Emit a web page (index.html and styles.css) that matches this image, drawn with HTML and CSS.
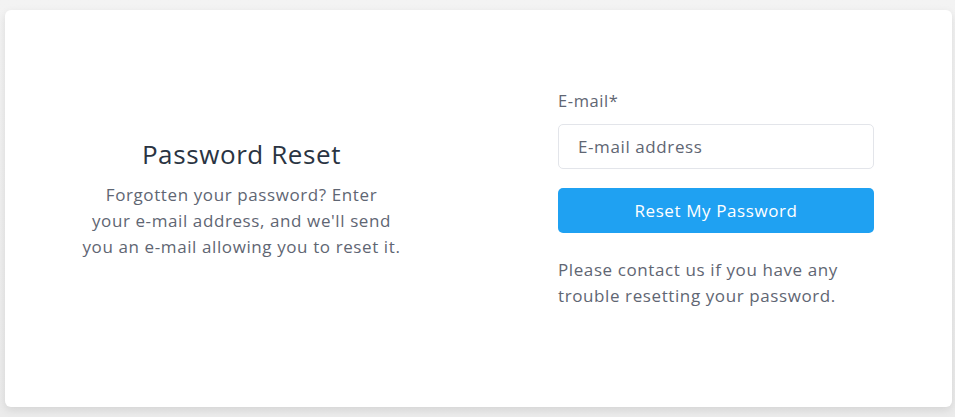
FILE: index.html
```html
<!DOCTYPE html>
<html lang="en">
<head>
<meta charset="utf-8">
<title>Password Reset</title>
<link rel="stylesheet" href="styles.css">
</head>
<body>
<main class="page">
  <section class="card">
    <div class="intro">
      <h1 class="title">Password Reset</h1>
      <p class="lead">Forgotten your password? Enter<br>your e-mail address, and we'll send<br>you an e-mail allowing you to reset it.</p>
    </div>
    <div class="form-col">
      <form class="form">
        <label class="label" for="email">E-mail*</label>
        <input class="input" id="email" type="email" placeholder="E-mail address">
        <button class="btn" type="button">Reset My Password</button>
      </form>
      <p class="note">Please contact us if you have any trouble resetting your password.</p>
    </div>
  </section>
</main>
</body>
</html>
```

FILE: styles.css
```css
* { box-sizing: border-box; }
html, body { margin: 0; padding: 0; }
body {
  width: 955px;
  height: 417px;
  overflow: hidden;
  background: linear-gradient(#f3f3f3, #ebebeb);
  font-family: "Open Sans", "Noto Sans", sans-serif;
  color: #5f6673;
  letter-spacing: 0.6px;
}
.page {
  padding: 10px 3px 10px 5px;
}
.card {
  height: 397px;
  background: #fff;
  border-radius: 6px;
  box-shadow: 0 3px 8px rgba(0,0,0,0.10);
  display: grid;
  grid-template-columns: 473px 1fr;
  align-items: center;
  padding-bottom: 20px;
}
.intro {
  text-align: center;
  padding: 0 40px;
}
.title {
  margin: 0 0 11px;
  font-size: 26px;
  line-height: 34px;
  font-weight: 400;
  color: #2a3442;
  letter-spacing: 0.6px;
}
.lead {
  margin: 0;
  font-size: 17px;
  line-height: 26px;
  white-space: nowrap;
}
.form-col {
  width: 316px;
  margin-left: 80px;
  margin-top: 1px;
}
.form { display: flex; flex-direction: column; }
.label {
  font-size: 16.5px;
  margin-bottom: 12px;
}
.input {
  height: 45px;
  border: 1px solid #e3e5ea;
  border-radius: 5px;
  padding: 0 19px;
  font: inherit;
  font-size: 17px;
  letter-spacing: 0.6px;
  color: #5f6673;
  outline: none;
}
.input::placeholder { color: #5f6673; }
.btn {
  margin-top: 19px;
  height: 45px;
  border: 0;
  border-radius: 5px;
  background: #1fa1f2;
  color: #fff;
  font: inherit;
  font-size: 17px;
  letter-spacing: 0.6px;
}
.note {
  margin: 24px 0 0;
  font-size: 17px;
  line-height: 26px;
}
```
